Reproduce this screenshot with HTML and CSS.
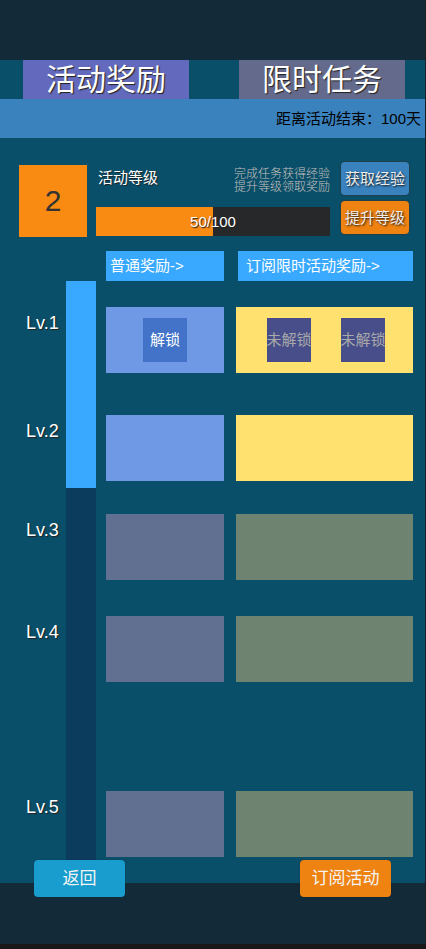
FILE: index.html
```html
<!DOCTYPE html>
<html lang="zh-CN">
<head>
<meta charset="utf-8">
<meta name="viewport" content="width=device-width, initial-scale=1">
<title>活动奖励</title>
<link rel="stylesheet" href="styles.css">
</head>
<body>
<div class="app">
  <nav class="tabs">
    <button class="tab tab-active" type="button">活动奖励</button>
    <button class="tab" type="button">限时任务</button>
  </nav>
  <p class="countdown">距离活动结束：100天</p>

  <main>
    <section class="summary">
      <div class="level">2</div>
      <div class="progress-info">
        <div class="info-top">
          <h1 class="info-title">活动等级</h1>
          <p class="hint">完成任务获得经验<br>提升等级领取奖励</p>
        </div>
        <div class="progress">50/100</div>
      </div>
      <div class="summary-actions">
        <button class="btn btn-small btn-blue" type="button">获取经验</button>
        <button class="btn btn-small btn-orange" type="button">提升等级</button>
      </div>
    </section>

    <div class="headings">
      <h2 class="heading">普通奖励-&gt;</h2>
      <h2 class="heading heading-premium">订阅限时活动奖励-&gt;</h2>
    </div>

    <section class="board">
      <div class="track"><div class="track-fill"></div></div>
      <div class="label">Lv.1</div>
      <div class="reward">
        <button class="slot slot-open" type="button">解锁</button>
      </div>
      <div class="reward premium">
        <button class="slot" type="button">未解锁</button>
        <button class="slot" type="button">未解锁</button>
      </div>
      <div class="label">Lv.2</div>
      <div class="reward"></div>
      <div class="reward premium"></div>
      <div class="label">Lv.3</div>
      <div class="reward locked"></div>
      <div class="reward premium locked"></div>
      <div class="label">Lv.4</div>
      <div class="reward locked"></div>
      <div class="reward premium locked"></div>
      <div class="label">Lv.5</div>
      <div class="reward locked"></div>
      <div class="reward premium locked"></div>
    </section>
  </main>

  <footer class="footer">
    <button class="btn btn-large btn-cyan" type="button">返回</button>
    <button class="btn btn-large btn-orange" type="button">订阅活动</button>
  </footer>
</div>
</body>
</html>
```

FILE: styles.css
```css
* {
  box-sizing: border-box;
}

body {
  margin: 0;
  min-height: 100vh;
  background: #181818;
  color: #fff;
  font-family: "Liberation Sans", "Noto Sans CJK SC", sans-serif;
  font-size: 15px;
  line-height: 20px;
}

h1,
h2,
p {
  margin: 0;
  font-size: 15px;
  font-weight: 400;
}

button {
  margin: 0;
  padding: 0;
  border: 0;
  color: inherit;
  font: inherit;
  white-space: nowrap;
}

.app {
  display: flex;
  flex-direction: column;
  min-height: calc(100vh - 5px);
  padding-top: 60px;
  border-right: 1px solid #182126;
  background: linear-gradient(#132a39 60px, #0a4f6a 60px);
}

.tabs {
  display: grid;
  grid-template-columns: 1fr 1fr;
  gap: 50px;
  padding: 0 20px 0 23px;
}

.tab {
  height: 39px;
  background: #636a8c;
  font-size: 30px;
  line-height: 39px;
  text-shadow: 1px 1px 1px #222;
}

.tab-active {
  background: #636abd;
}

.countdown {
  padding: 10px 4px 9px;
  background: #3a82be;
  color: #000;
  text-align: right;
}

.summary {
  display: grid;
  grid-template-columns: 68px 1fr 68px;
  padding: 24px 16px 0 19px;
}

.level {
  height: 72px;
  margin-top: 3px;
  background: #f98a12;
  color: #333;
  font-size: 30px;
  line-height: 72px;
  text-align: center;
}

.progress-info {
  display: flex;
  flex-direction: column;
  justify-content: space-between;
  padding: 6px 11px 0 9px;
}

.info-top {
  display: flex;
  justify-content: space-between;
  padding-left: 2px;
}

.info-title {
  text-shadow: 1px 1px 1px #222;
}

.hint {
  color: #c4c0bc;
  font-size: 12px;
  font-weight: 300;
  line-height: 13px;
}

.progress {
  height: 29px;
  margin-bottom: 1px;
  background: linear-gradient(90deg, #f98a12 50%, #27282a 50%);
  line-height: 29px;
  text-align: center;
  text-shadow: 1px 1px 1px #222;
}

.summary-actions {
  display: flex;
  flex-direction: column;
  gap: 6px;
}

.btn {
  border-radius: 4px;
}

.btn-small {
  height: 33px;
  box-shadow: 0 0 1px 1px #20404c;
  color: #eee;
  text-shadow: 1px 1px 2px #111;
}

.btn-large {
  width: 91px;
  height: 37px;
  box-shadow: 0 0 1px #182126;
  color: #f4f4f4;
  font-size: 17px;
  line-height: 37px;
}

.btn-blue {
  background: #3a82be;
}

.btn-orange {
  background: #ee8311;
}

.btn-cyan {
  background: #189dce;
}

.headings {
  display: grid;
  grid-template-columns: 2fr 3fr;
  gap: 12px;
  padding: 14px 12px 0 106px;
}

.heading {
  padding: 5px 4px;
  background: #39a9ff;
}

.heading-premium {
  margin-left: 2px;
  padding-left: 8px;
}

.board {
  display: grid;
  grid-template-columns: 66px 30px 10px 2fr 12px 3fr;
  grid-template-rows: 92px 108px 99px 102px 175px;
  padding: 0 12px 3px 0;
}

.track {
  grid-column: 2;
  grid-row: 1 / -1;
  margin-bottom: -3px;
  background: #0b3b5d;
}

.track-fill {
  height: 207px;
  background: #39a9ff;
}

.label {
  grid-column: 1;
  align-self: end;
  height: 60px;
  padding-left: 26px;
  font-size: 18px;
  text-shadow: 1px 1px 1px #222;
}

.reward {
  grid-column: 4;
  display: flex;
  align-items: center;
  align-self: end;
  justify-content: center;
  gap: 30px;
  height: 66px;
  background: #6f99e5;
}

.premium {
  grid-column: 6;
  padding-left: 2px;
  background: #ffe16f;
}

.locked {
  background: #617090;
}

.premium.locked {
  background: #6e8370;
}

.slot {
  width: 44px;
  height: 44px;
  background: #474e8a;
  color: #a9a9a9;
}

.slot-open {
  background: #4273c8;
  color: #fff;
}

.footer {
  display: flex;
  flex: 1;
  align-items: flex-start;
  justify-content: space-between;
  padding: 0 34px;
  background: linear-gradient(transparent 23px, #132a39 23px);
}
```
